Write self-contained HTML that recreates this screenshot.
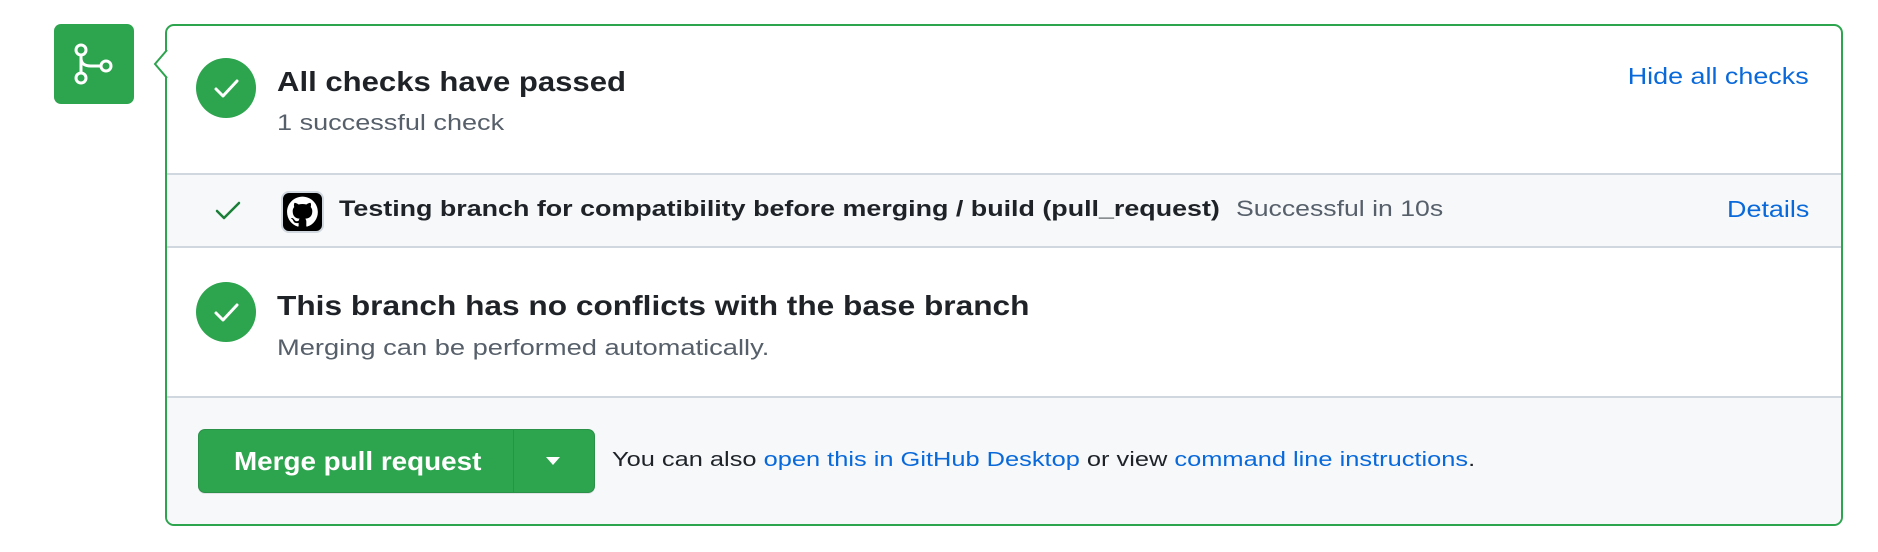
<!DOCTYPE html>
<html><head><meta charset="utf-8"><style>
*{box-sizing:border-box;margin:0;padding:0}
body{width:1878px;height:552px;background:#fff;font-family:"Liberation Sans",Arial,sans-serif;position:relative;overflow:hidden;color:#1f2328}
.abs{position:absolute;white-space:nowrap}
.sx{transform-origin:0 50%}
.sxr{transform-origin:100% 50%}
.icon{left:54px;top:24px;width:80px;height:80px;background:#2da44e;border-radius:7px}
.card{left:165px;top:24px;width:1678px;height:502px;border:2px solid #2da44e;border-radius:9px;overflow:hidden;background:#fff}
.arrow{left:152px;top:50px;width:18px;height:28px}
.circ{width:60px;height:60px;border-radius:50%;background:#2da44e}
.blue{color:#0969da}
.gray{color:#57606a}
</style></head><body>
<div class="abs icon">
<svg width="80" height="80" viewBox="0 0 80 80" fill="none" stroke="#fff" stroke-width="3">
<circle cx="27" cy="26" r="5"/><circle cx="27" cy="54" r="5"/><circle cx="52" cy="42" r="5"/>
<path d="M27 31v18M27 34c0 6 4 8 10 8h10"/>
</svg></div>
<div class="abs card">
 <div class="abs" style="left:0;top:147px;width:100%;height:75px;background:#f6f8fa;border-top:2px solid #d0d7de;border-bottom:2px solid #d0d7de"></div>
 <div class="abs" style="left:0;top:370px;width:100%;height:140px;background:#f6f8fa;border-top:2px solid #d0d7de"></div>
</div>
<svg class="abs arrow" viewBox="0 0 18 28"><path d="M14 0 L2 14 L14 28 L18 28 L18 0Z" fill="#fff"/><path d="M15 0 L3 14 L15 28" fill="none" stroke="#2da44e" stroke-width="2"/></svg>

<div class="abs circ" style="left:196px;top:58px"><svg width="60" height="60"><path d="M20 31l7 7 14-15" fill="none" stroke="#fff" stroke-width="3" stroke-linecap="round" stroke-linejoin="round"/></svg></div>
<div class="abs sx" style="left:277px;top:66px;font-size:28px;font-weight:bold;transform:scaleX(1.11)">All checks have passed</div>
<div class="abs gray sx" style="left:277px;top:110px;font-size:22px;transform:scaleX(1.23)">1 successful check</div>
<div class="abs blue sxr" style="right:69px;top:63px;font-size:23px;transform:scaleX(1.17)">Hide all checks</div>

<svg class="abs" style="left:214px;top:199px" width="28" height="24"><path d="M3 12l7 7 15-15" fill="none" stroke="#1a7f37" stroke-width="2.5" stroke-linecap="round" stroke-linejoin="round"/></svg>
<div class="abs" style="left:281px;top:191px;width:43px;height:42px;background:#000;border-radius:8px;border:2px solid #d0d7de">
<svg width="39" height="38" viewBox="0 0 16 16"><path fill="#fff" transform="translate(1.5 1.5) scale(.81)" d="M8 0C3.580 0 0 3.58 0 8c0 3.54 2.29 6.53 5.47 7.59.4.07.55-.17.55-.38 0-.19-.01-.82-.01-1.490-2.01.37-2.53-.49-2.69-.94-.09-.23-.48-.94-.82-1.13-.28-.15-.68-.52-.01-.53.63-.01 1.08.58 1.23.82.72 1.21 1.870.87 2.33.66.07-.52.28-.87.51-1.07-1.78-.2-3.64-.89-3.64-3.95 0-.87.31-1.59.82-2.150-.08-.2-.36-1.02.08-2.12 0 0 .67-.21 2.2.82.64-.18 1.32-.27 2-.27.68 0 1.36.09 2 .27 1.53-1.04 2.2-.82 2.2-.82.44 1.1.16 1.92.08 2.12.51.56.82 1.27.82 2.15 0 3.07-1.87 3.75-3.65 3.95.29.25.54.73.54 1.48 0 1.07-.01 1.93-.01 2.2 0 .21.15.46.55.38A8.013 8.013 0 0016 8c0-4.42-3.58-8-8-8z"/></svg></div>
<div class="abs sx" style="left:339px;top:196px;font-size:22px;font-weight:bold;transform:scaleX(1.22)">Testing branch for compatibility before merging / build (pull_request)</div>
<div class="abs gray sx" style="left:1236px;top:196px;font-size:22px;transform:scaleX(1.21)">Successful in 10s</div>
<div class="abs blue sxr" style="right:69px;top:196px;font-size:23px;transform:scaleX(1.17)">Details</div>

<div class="abs circ" style="left:196px;top:282px"><svg width="60" height="60"><path d="M20 31l7 7 14-15" fill="none" stroke="#fff" stroke-width="3" stroke-linecap="round" stroke-linejoin="round"/></svg></div>
<div class="abs sx" style="left:277px;top:290px;font-size:28px;font-weight:bold;transform:scaleX(1.13)">This branch has no conflicts with the base branch</div>
<div class="abs gray sx" style="left:277px;top:335px;font-size:22px;transform:scaleX(1.24)">Merging can be performed automatically.</div>

<div class="abs" style="left:198px;top:429px;width:397px;height:64px;background:#2da44e;border-radius:7px;border:1px solid rgba(31,35,40,.15);box-shadow:0 1px 0 rgba(31,35,40,.1)">
 <div class="abs sx" style="left:35px;top:16px;font-size:26px;font-weight:bold;color:#fff;transform:scaleX(1.07)">Merge pull request</div>
 <div class="abs" style="left:314px;top:0;width:1px;height:62px;background:rgba(31,35,40,.15)"></div>
 <svg class="abs" style="left:346px;top:26px" width="16" height="10"><path d="M1 1h14L8 9z" fill="#fff"/></svg>
</div>
<div class="abs sx" style="left:612px;top:449px;font-size:20px;transform:scaleX(1.27)">You can also <span class="blue">open this in GitHub Desktop</span> or view <span class="blue">command line instructions</span>.</div>
</body></html>
